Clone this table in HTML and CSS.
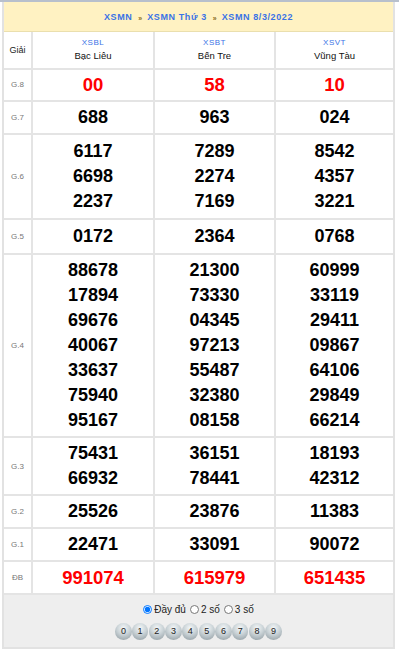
FILE: index.html
```html
<!DOCTYPE html>
<html>
<head>
<meta charset="utf-8">
<link rel="stylesheet" href="styles.css">
</head>
<body>
<div class="topline"></div>
<div class="box">
  <div class="crumb">
    <a>XSMN</a><span class="sep">»</span><a>XSMN Thứ 3</a><span class="sep">»</span><a>XSMN 8/3/2022</a>
  </div>
  <table class="kq">
    <colgroup><col class="c0"><col class="c1"><col class="c2"><col class="c3"></colgroup>
    <tr class="head">
      <td class="lbl giai">Giải</td>
      <td><div class="code">XSBL</div><div class="prov">Bạc Liêu</div></td>
      <td><div class="code">XSBT</div><div class="prov">Bến Tre</div></td>
      <td><div class="code">XSVT</div><div class="prov">Vũng Tàu</div></td>
    </tr>
    <tr class="r8"><td class="lbl">G.8</td><td class="num red">00</td><td class="num red">58</td><td class="num red">10</td></tr>
    <tr><td class="lbl">G.7</td><td class="num">688</td><td class="num">963</td><td class="num">024</td></tr>
    <tr class="r6"><td class="lbl">G.6</td>
      <td class="num"><div>6117</div><div>6698</div><div>2237</div></td>
      <td class="num"><div>7289</div><div>2274</div><div>7169</div></td>
      <td class="num"><div>8542</div><div>4357</div><div>3221</div></td></tr>
    <tr class="r5"><td class="lbl">G.5</td><td class="num">0172</td><td class="num">2364</td><td class="num">0768</td></tr>
    <tr><td class="lbl">G.4</td>
      <td class="num"><div>88678</div><div>17894</div><div>69676</div><div>40067</div><div>33637</div><div>75940</div><div>95167</div></td>
      <td class="num"><div>21300</div><div>73330</div><div>04345</div><div>97213</div><div>55487</div><div>32380</div><div>08158</div></td>
      <td class="num"><div>60999</div><div>33119</div><div>29411</div><div>09867</div><div>64106</div><div>29849</div><div>66214</div></td></tr>
    <tr><td class="lbl">G.3</td>
      <td class="num"><div>75431</div><div>66932</div></td>
      <td class="num"><div>36151</div><div>78441</div></td>
      <td class="num"><div>18193</div><div>42312</div></td></tr>
    <tr><td class="lbl">G.2</td><td class="num">25526</td><td class="num">23876</td><td class="num">11383</td></tr>
    <tr><td class="lbl">G.1</td><td class="num">22471</td><td class="num">33091</td><td class="num">90072</td></tr>
    <tr><td class="lbl">ĐB</td><td class="num red">991074</td><td class="num red">615979</td><td class="num red">651435</td></tr>
  </table>
  <div class="foot">
    <div class="opts">
      <label class="opt"><input type="radio" name="n" checked>Đầy đủ</label>
      <label class="opt"><input type="radio" name="n">2 số</label>
      <label class="opt"><input type="radio" name="n">3 số</label>
    </div>
    <div class="balls">
      <span class="ball">0</span><span class="ball">1</span><span class="ball">2</span><span class="ball">3</span><span class="ball">4</span><span class="ball">5</span><span class="ball">6</span><span class="ball">7</span><span class="ball">8</span><span class="ball">9</span>
    </div>
  </div>
</div>
<div class="next"></div>
</body>
</html>
```
FILE: styles.css
```css
html, body { margin: 0; padding: 0; background: #fff; }
body { font-family: "Liberation Sans", Arial, sans-serif; width: 399px; }
.topline { height: 2px; background: #b8c0cc; }
.box { margin-left: 2px; width: 393px; border-left: 2px solid #e2e2e2; border-right: 2px solid #e2e2e2; border-bottom: 2px solid #e2e2e2; box-sizing: border-box; }
.crumb { height: 30px; background: #fff2c2; border-bottom: 1px solid #eadfae; display: flex; align-items: center; justify-content: center; font-size: 9px; font-weight: bold; color: #3a73e6; letter-spacing: 0.6px; box-sizing: border-box; }
.crumb .sep { font-size: 7px; color: #8a6a1a; margin: 4px 5px 0 6px; letter-spacing: 0; }
.kq { width: 100%; border-collapse: collapse; table-layout: fixed; }
.kq col.c0 { width: 28px; }
.kq col.c1 { width: 122px; }
.kq col.c2 { width: 121px; }
.kq td { border: 2px solid #e4e4e4; text-align: center; vertical-align: middle; padding: 3px 0; }
.kq tr:first-child td { border-top: 0; }
.kq tr td:first-child { border-left: 0; }
.kq tr td:last-child { border-right: 0; }
.kq tr:last-child td { border-bottom: 0; }
.head td { height: 32px; padding: 2px 0; }
.r8 td { padding: 2px 0 3px; }
.r6 td { padding: 4px 0; }
.r5 td { padding: 4px 0; }
.lbl { font-size: 8px; color: #777; }
.lbl.giai { font-size: 9px; color: #222; }
.code { font-size: 8px; color: #3a73e6; letter-spacing: 0.5px; line-height: 12px; }
.prov { font-size: 9.5px; color: #111; line-height: 14px; }
.num { font-size: 18px; font-weight: bold; color: #000; line-height: 25px; }
.num.red { color: #f00; font-size: 18.5px; }
.foot { background: #eeeeee; border-top: 2px solid #e4e4e4; height: 54px; display: flex; flex-direction: column; align-items: center; padding-top: 6px; box-sizing: border-box; }
.opts { display: flex; align-items: center; font-size: 10px; color: #222; height: 16px; }
.opt { display: flex; align-items: center; margin: 0 2px; }
.opt input { width: 9px; height: 9px; margin: 0 2px 0 0; }
.balls { display: flex; margin-top: 6px; }
.ball { width: 16.5px; height: 16.5px; margin: 0 0.1px; border-radius: 50%; background: radial-gradient(circle at 50% 30%, #f4f7f8 0%, #c9d2d6 45%, #8b979d 100%); font-size: 9px; color: #222; display: flex; align-items: center; justify-content: center; }
.next { margin-top: 2px; height: 2px; background: #dcdcdc; }
```
